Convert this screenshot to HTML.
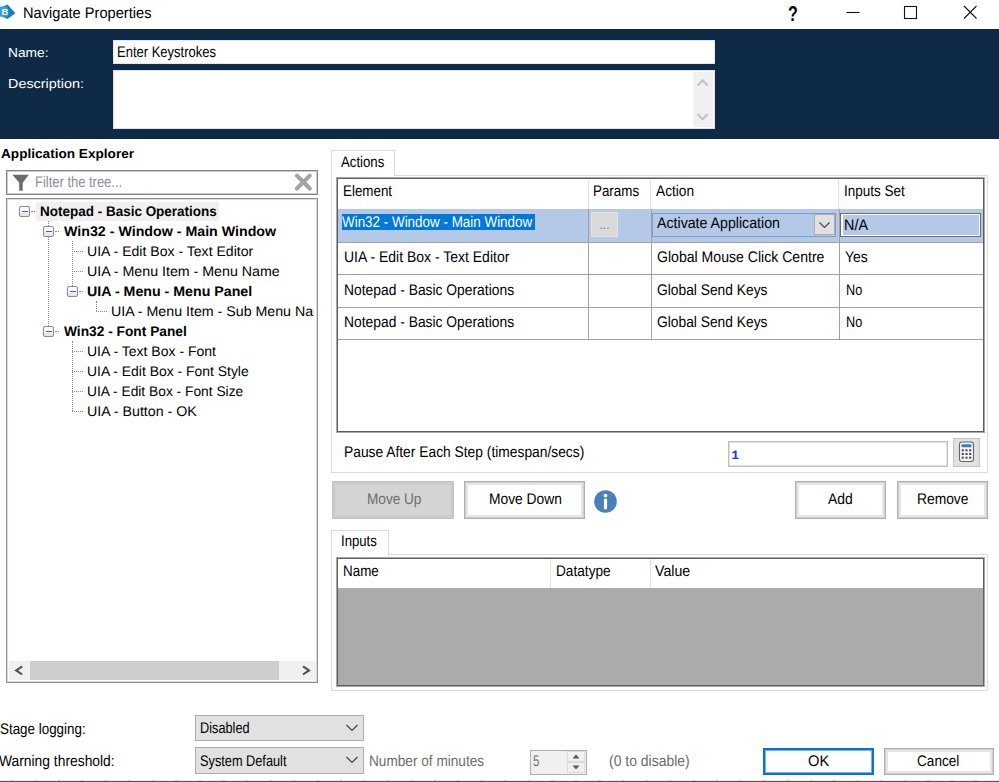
<!DOCTYPE html>
<html>
<head>
<meta charset="utf-8">
<title>Navigate Properties</title>
<style>
html,body{margin:0;padding:0;}
body{width:999px;height:782px;position:relative;overflow:hidden;background:#fff;font-family:"Liberation Sans",sans-serif;font-size:13px;color:#000;}
.a{position:absolute;white-space:nowrap;box-sizing:border-box;}
.t{position:absolute;white-space:pre;line-height:20px;height:20px;transform-origin:0 0;text-rendering:geometricPrecision;}
.hdr{left:0;top:29px;width:999px;height:110px;background:#0e2a47;}
.exp{position:absolute;width:11px;height:11px;box-sizing:border-box;border:1px solid #8a8a8a;border-radius:2px;background:linear-gradient(#fff,#e2e2e2);}
.exp:after{content:"";position:absolute;left:1.5px;top:4px;width:6px;height:1px;background:#4a60c0;}
.vd{position:absolute;width:0;border-left:1px dotted #8c8c8c;}
.hd{position:absolute;height:0;border-top:1px dotted #8c8c8c;}
.btn{position:absolute;box-sizing:border-box;border:1px solid #b0b0b0;background:#fff;box-shadow:inset 0 0 0 1px #cfcfcf,inset 0 0 0 3px #e6e6e6;}
.combo{position:absolute;box-sizing:border-box;border:1px solid #adadad;background:#e1e1e1;}
</style>
</head>
<body>
<!-- title bar -->
<svg class="a" style="left:0;top:0" width="17" height="24" viewBox="0 0 17 24"><path d="M7.6 4.6 L15.4 13.2 L7.6 19 L3 17 L3 6.4 Z" fill="#1b7fc6"/><rect x="-3" y="6.6" width="10.6" height="10.2" rx="1.6" fill="#3a9de0"/><text x="1.4" y="15" font-family="Liberation Sans, sans-serif" font-size="9.6" font-weight="bold" fill="#f2f9ff">B</text></svg>
<svg class="a" style="left:840px;top:0" width="159" height="29" viewBox="0 0 159 29" fill="none" stroke="#111" stroke-width="1.1">
<line x1="6.5" y1="12.5" x2="19.5" y2="12.5"/>
<rect x="64.5" y="6.5" width="12" height="12"/>
<line x1="124" y1="6" x2="136.5" y2="18.5"/><line x1="136.5" y1="6" x2="124" y2="18.5"/>
</svg>
<!-- header -->
<div class="a hdr"></div>
<div class="a" style="left:113px;top:40px;width:602px;height:24px;background:#fff;border:1px solid #e8e8e8;"></div>
<div class="a" style="left:113px;top:70px;width:602px;height:59px;background:#fff;border:1px solid #e0e0e0;"></div>
<div class="a" style="left:693px;top:72px;width:20px;height:55px;background:#f0f0f0;"></div>
<svg class="a" style="left:693px;top:72px" width="20" height="55" viewBox="0 0 20 55" fill="none" stroke="#c2c2c2" stroke-width="2.1"><polyline points="4.6,13.4 9.6,8.2 14.6,13.4"/><polyline points="4.6,42 9.6,47.2 14.6,42"/></svg>
<!-- left panel -->
<div class="a" style="left:6px;top:170px;width:312px;height:25px;border:1px solid #858585;box-shadow:inset 0 0 0 1px rgba(125,125,125,.4);background:#fff;"></div>
<svg class="a" style="left:0;top:170px" width="40" height="25" viewBox="0 170 40 25"><path d="M12.4 174.8 H28.9 L22.7 182.8 V190.7 H19.2 V182.8 Z" fill="#6b6b6b"/></svg>
<svg class="a" style="left:290px;top:170px" width="26" height="25" viewBox="290 170 26 25" stroke="#a3a3a3" stroke-width="4.1" stroke-linecap="round"><line x1="296.9" y1="175.6" x2="309.8" y2="188.5"/><line x1="309.8" y1="175.6" x2="296.9" y2="188.5"/></svg>
<div class="a" style="left:6px;top:198px;width:312px;height:485px;border:1px solid #8a8f9c;box-shadow:inset 0 0 0 1px rgba(130,135,150,.3);background:#fff;overflow:hidden;">
<div class="a" style="left:0;top:0;width:306.5px;height:462px;overflow:hidden;"><div class="a" style="left:-7px;top:-199px;width:999px;height:782px;">
<div class="a" style="left:36.3px;top:201.5px;width:182.4px;height:19.5px;background:#f0f0f0;"></div>
<div class="exp" style="left:19px;top:206.0px;"></div>
<div class="hd" style="left:31px;top:211.0px;width:4px;"></div>
<div class="exp" style="left:43px;top:226.0px;"></div>
<div class="hd" style="left:55px;top:231.0px;width:4px;"></div>
<div class="hd" style="left:72px;top:251.0px;width:11px;"></div>
<div class="hd" style="left:72px;top:271.0px;width:11px;"></div>
<div class="exp" style="left:67px;top:286.0px;"></div>
<div class="hd" style="left:79px;top:291.0px;width:4px;"></div>
<div class="hd" style="left:96px;top:311.0px;width:11px;"></div>
<div class="exp" style="left:43px;top:326.0px;"></div>
<div class="hd" style="left:55px;top:331.0px;width:4px;"></div>
<div class="hd" style="left:72px;top:351.0px;width:11px;"></div>
<div class="hd" style="left:72px;top:371.0px;width:11px;"></div>
<div class="hd" style="left:72px;top:391.0px;width:11px;"></div>
<div class="hd" style="left:72px;top:411.0px;width:11px;"></div>
<div class="vd" style="left:48px;top:221px;height:5px;"></div>
<div class="vd" style="left:48px;top:237px;height:89px;"></div>
<div class="vd" style="left:72px;top:241px;height:45px;"></div>
<div class="vd" style="left:96px;top:301px;height:10px;"></div>
<div class="vd" style="left:72px;top:341px;height:70px;"></div>
<div class="t" style="left:39.80px;top:201px;font-size:14px;font-weight:bold;transform:scaleX(0.9630);">Notepad - Basic Operations</div>
<div class="t" style="left:63.90px;top:221px;font-size:14px;font-weight:bold;transform:scaleX(1.0158);">Win32 - Window - Main Window</div>
<div class="t" style="left:87.30px;top:241px;font-size:14px;transform:scaleX(1.0042);">UIA - Edit Box - Text Editor</div>
<div class="t" style="left:87.30px;top:261px;font-size:14px;transform:scaleX(1.0147);">UIA - Menu Item - Menu Name</div>
<div class="t" style="left:87.30px;top:281px;font-size:14px;font-weight:bold;transform:scaleX(1.0147);">UIA - Menu - Menu Panel</div>
<div class="t" style="left:111.30px;top:301px;font-size:14px;transform:scaleX(1.0147);">UIA - Menu Item - Sub Menu Name</div>
<div class="t" style="left:63.90px;top:321px;font-size:14px;font-weight:bold;transform:scaleX(0.9816);">Win32 - Font Panel</div>
<div class="t" style="left:87.30px;top:341px;font-size:14px;transform:scaleX(1.0008);">UIA - Text Box - Font</div>
<div class="t" style="left:87.30px;top:361px;font-size:14px;transform:scaleX(0.9944);">UIA - Edit Box - Font Style</div>
<div class="t" style="left:87.30px;top:381px;font-size:14px;transform:scaleX(0.9843);">UIA - Edit Box - Font Size</div>
<div class="t" style="left:87.30px;top:401px;font-size:14px;transform:scaleX(1.0148);">UIA - Button - OK</div>
</div></div>
<div class="a" style="left:2px;top:462px;width:306.5px;height:19px;background:#f0f0f0;"></div>
<div class="a" style="left:23px;top:462px;width:248.5px;height:19px;background:#cdcdcd;"></div>
<svg class="a" style="left:2px;top:462px" width="307" height="19" viewBox="9 661 307 19" fill="none" stroke="#505050" stroke-width="2.1"><polyline points="22.2,666.3 16.2,670.4 22.2,674.5"/><polyline points="303,666.3 309,670.4 303,674.5"/></svg>
</div>
<!-- actions tab -->
<div class="a" style="left:331px;top:175px;width:657px;height:298px;border:1px solid #dcdcdc;background:#fff;"></div>
<div class="a" style="left:331px;top:150px;width:64px;height:26px;border:1px solid #dcdcdc;border-bottom:none;background:#fff;"></div>
<div class="a" style="left:336px;top:177px;width:649px;height:256px;border:1px solid #a8a8a8;background:#fff;"></div>
<div class="a" style="left:337px;top:178px;width:647px;height:254px;border:1px solid #5f5f5f;background:#fff;"></div>
<div class="a" style="left:587.5px;top:180px;width:1px;height:29px;background:#e2e2e2;"></div>
<div class="a" style="left:650px;top:180px;width:1px;height:29px;background:#e2e2e2;"></div>
<div class="a" style="left:838px;top:180px;width:1px;height:29px;background:#e2e2e2;"></div>
<div class="a" style="left:338px;top:209px;width:645px;height:32.5px;background:#b4c8e8;"></div>
<div class="a" style="left:338px;top:241.5px;width:645px;height:1px;background:#a0a0a0;"></div>
<div class="a" style="left:338px;top:274px;width:645px;height:1px;background:#a0a0a0;"></div>
<div class="a" style="left:338px;top:306.5px;width:645px;height:1px;background:#a0a0a0;"></div>
<div class="a" style="left:338px;top:339px;width:645px;height:1px;background:#a0a0a0;"></div>
<div class="a" style="left:588px;top:209px;width:1px;height:131px;background:#a0a0a0;"></div>
<div class="a" style="left:651px;top:209px;width:1px;height:131px;background:#a0a0a0;"></div>
<div class="a" style="left:838.5px;top:209px;width:1px;height:131px;background:#a0a0a0;"></div>
<div class="a" style="left:342px;top:214px;width:192.5px;height:16px;background:#0078d7;"></div>
<div class="a" style="left:591px;top:212px;width:27px;height:25px;background:#d9d9d9;border:1px solid #e3e3e3;"></div>
<div class="t" style="left:599.5px;top:215px;font-size:12px;color:#777;">...</div>
<div class="a" style="left:652px;top:212.5px;width:184px;height:24.5px;border:1px solid #7f9bc8;background:#b4c8e8;"></div>
<div class="a" style="left:814px;top:214px;width:21px;height:21px;border:1px solid #adadad;background:#e1e1e1;"></div>
<svg class="a" style="left:814px;top:214px" width="21" height="21" viewBox="0 0 21 21" fill="none" stroke="#444" stroke-width="1.2"><polyline points="5.5,8.5 10.5,13.5 15.5,8.5"/></svg>
<div class="a" style="left:840px;top:212.5px;width:141px;height:24px;border:1px solid #6e6e6e;background:#fff;"></div>
<div class="a" style="left:842.5px;top:215px;width:136.5px;height:19.5px;background:#b4c8e8;"></div>
<div class="a" style="left:728px;top:441px;width:220px;height:26px;border:1px solid #bcbec6;box-shadow:inset 0 0 0 1px rgba(190,192,200,.45);background:#fff;"></div>
<div class="t" style="left:731.2px;top:446px;font-family:'Liberation Mono',monospace;font-size:13px;color:#2a2aff;font-weight:bold;">1</div>
<div class="a" style="left:953px;top:438px;width:27px;height:29px;border:1px solid #c4c4c4;background:#e1e1e1;"></div>
<svg class="a" style="left:953px;top:438px" width="27" height="29" viewBox="0 0 27 29"><rect x="6.5" y="4" width="14" height="19.5" rx="2.5" fill="#f4f4f4" stroke="#666" stroke-width="1.1"/><rect x="8.5" y="6.3" width="10" height="3" rx="1" fill="#3d7cc4"/><g fill="#444"><rect x="8.8" y="11.3" width="2" height="2"/><rect x="12.5" y="11.3" width="2" height="2"/><rect x="16.2" y="11.3" width="2" height="2"/><rect x="8.8" y="15" width="2" height="2"/><rect x="12.5" y="15" width="2" height="2"/><rect x="16.2" y="15" width="2" height="2"/><rect x="8.8" y="18.7" width="2" height="2"/><rect x="12.5" y="18.7" width="2" height="2"/><rect x="16.2" y="18.7" width="2" height="2"/></g></svg>
<div class="a" style="left:332px;top:481px;width:122px;height:38px;border:1px solid #c2c2c2;background:#d4d4d4;box-shadow:inset 0 0 0 1px #c8c8c8,inset 0 0 0 3px #cecece;"></div>
<div class="btn" style="left:464px;top:481px;width:121px;height:38px;"></div>
<svg class="a" style="left:593px;top:489px" width="25" height="25" viewBox="0 0 25 25"><circle cx="12.5" cy="12.5" r="11.3" fill="#4a7fb8"/><circle cx="12.5" cy="6.6" r="1.9" fill="#fff"/><rect x="10.9" y="9.8" width="3.2" height="10.4" rx="0.6" fill="#fff"/></svg>
<div class="btn" style="left:795px;top:481px;width:91px;height:38px;"></div>
<div class="btn" style="left:896.5px;top:481px;width:91px;height:38px;"></div>
<!-- inputs tab -->
<div class="a" style="left:331px;top:554px;width:657px;height:137px;border:1px solid #dcdcdc;background:#fff;"></div>
<div class="a" style="left:331px;top:529.5px;width:57.5px;height:26px;border:1px solid #dcdcdc;border-bottom:none;background:#fff;"></div>
<div class="a" style="left:336px;top:556.5px;width:649px;height:130.5px;border:1px solid #a8a8a8;background:#fff;"></div>
<div class="a" style="left:337px;top:557.5px;width:647px;height:128.5px;border:1px solid #5f5f5f;background:#ababab;"></div>
<div class="a" style="left:338px;top:558.5px;width:645px;height:29.5px;background:#fff;"></div>
<div class="a" style="left:549.5px;top:559px;width:1px;height:29px;background:#e2e2e2;"></div>
<div class="a" style="left:650px;top:559px;width:1px;height:29px;background:#e2e2e2;"></div>
<!-- bottom -->
<div class="combo" style="left:194.5px;top:714.5px;width:169px;height:26.5px;"></div>
<svg class="a" style="left:345px;top:722.5px" width="14" height="10" viewBox="0 0 14 10" fill="none" stroke="#444" stroke-width="1.2"><polyline points="1.5,2 7,7.5 12.5,2"/></svg>
<div class="combo" style="left:194.5px;top:747px;width:169px;height:26.5px;"></div>
<svg class="a" style="left:345px;top:755px" width="14" height="10" viewBox="0 0 14 10" fill="none" stroke="#444" stroke-width="1.2"><polyline points="1.5,2 7,7.5 12.5,2"/></svg>
<div class="a" style="left:530px;top:750px;width:57px;height:24.5px;border:1px solid #adadad;background:#f0f0f0;"></div>
<svg class="a" style="left:567px;top:751px" width="18" height="22" viewBox="0 0 18 22"><rect x="0.5" y="0.5" width="17" height="10" fill="#f0f0f0" stroke="#dadada"/><rect x="0.5" y="11.5" width="17" height="10" fill="#f0f0f0" stroke="#dadada"/><polygon points="5.5,7.5 9,3.5 12.5,7.5" fill="#555"/><polygon points="5.5,14.5 9,18.5 12.5,14.5" fill="#555"/></svg>
<div class="a" style="left:763px;top:748px;width:110.5px;height:27px;border:2px solid #0b72d2;box-shadow:inset 0 0 0 1px rgba(11,114,210,.55);background:#fff;"></div>
<div class="btn" style="left:884px;top:748px;width:110px;height:27px;"></div>
<div class="a" style="left:0;top:780px;width:999px;height:1px;background:repeating-linear-gradient(90deg,rgba(80,80,80,.12) 0,rgba(80,80,80,.12) 10.5px,rgba(80,80,80,.3) 10.5px,rgba(80,80,80,.3) 13px,rgba(80,80,80,.12) 13px,rgba(80,80,80,.12) 23.5px);"></div>
<div class="a" style="left:0;top:781px;width:999px;height:1px;background:#555;"></div>
<!-- text -->
<div class="t" style="left:22.60px;top:4px;font-size:15.4px;transform:scaleX(0.9504);">Navigate Properties</div>
<div class="t" style="left:788.45px;top:4px;font-size:21.5px;font-weight:bold;transform:scaleX(0.7455);">?</div>
<div class="t" style="left:8.00px;top:43px;font-size:13px;color:#fff;transform:scaleX(1.0579);">Name:</div>
<div class="t" style="left:8.00px;top:74px;font-size:13px;color:#fff;transform:scaleX(1.1074);">Description:</div>
<div class="t" style="left:117.40px;top:43px;font-size:15.4px;transform:scaleX(0.8444);">Enter Keystrokes</div>
<div class="t" style="left:1.30px;top:144px;font-size:13px;font-weight:bold;transform:scaleX(1.0465);">Application Explorer</div>
<div class="t" style="left:35.20px;top:173px;font-size:15.4px;color:#8c8c9c;transform:scaleX(0.8417);">Filter the tree...</div>
<div class="t" style="left:341.20px;top:153px;font-size:15.4px;transform:scaleX(0.8580);">Actions</div>
<div class="t" style="left:342.80px;top:182px;font-size:15.4px;transform:scaleX(0.8684);">Element</div>
<div class="t" style="left:593.20px;top:182px;font-size:15.4px;transform:scaleX(0.8698);">Params</div>
<div class="t" style="left:655.80px;top:182px;font-size:15.4px;transform:scaleX(0.8907);">Action</div>
<div class="t" style="left:843.52px;top:182px;font-size:15.4px;transform:scaleX(0.8783);">Inputs Set</div>
<div class="t" style="left:342.00px;top:213px;font-size:15.4px;color:#fff;transform:scaleX(0.8721);">Win32 - Window - Main Window</div>
<div class="t" style="left:656.80px;top:214px;font-size:15.4px;transform:scaleX(0.9211);">Activate Application</div>
<div class="t" style="left:844.10px;top:216px;font-size:15.4px;transform:scaleX(0.9346);">N/A</div>
<div class="t" style="left:343.80px;top:248px;font-size:15.4px;transform:scaleX(0.9088);">UIA - Edit Box - Text Editor</div>
<div class="t" style="left:657.10px;top:248px;font-size:15.4px;transform:scaleX(0.9148);">Global Mouse Click Centre</div>
<div class="t" style="left:845.30px;top:248px;font-size:15.4px;transform:scaleX(0.9000);">Yes</div>
<div class="t" style="left:343.80px;top:281px;font-size:15.4px;transform:scaleX(0.8995);">Notepad - Basic Operations</div>
<div class="t" style="left:657.10px;top:281px;font-size:15.4px;transform:scaleX(0.8967);">Global Send Keys</div>
<div class="t" style="left:845.60px;top:281px;font-size:15.4px;transform:scaleX(0.8250);">No</div>
<div class="t" style="left:343.80px;top:313px;font-size:15.4px;transform:scaleX(0.8995);">Notepad - Basic Operations</div>
<div class="t" style="left:657.10px;top:313px;font-size:15.4px;transform:scaleX(0.8967);">Global Send Keys</div>
<div class="t" style="left:845.60px;top:313px;font-size:15.4px;transform:scaleX(0.8250);">No</div>
<div class="t" style="left:344.40px;top:443px;font-size:15.4px;transform:scaleX(0.8974);">Pause After Each Step (timespan/secs)</div>
<div class="t" style="left:366.50px;top:490px;font-size:15.4px;color:#6d6d6d;transform:scaleX(0.8839);">Move Up</div>
<div class="t" style="left:488.90px;top:490px;font-size:15.4px;transform:scaleX(0.8975);">Move Down</div>
<div class="t" style="left:828.20px;top:490px;font-size:15.4px;transform:scaleX(0.9037);">Add</div>
<div class="t" style="left:916.60px;top:490px;font-size:15.4px;transform:scaleX(0.8982);">Remove</div>
<div class="t" style="left:340.65px;top:532px;font-size:15.4px;transform:scaleX(0.8537);">Inputs</div>
<div class="t" style="left:342.60px;top:562px;font-size:15.4px;transform:scaleX(0.8707);">Name</div>
<div class="t" style="left:555.80px;top:562px;font-size:15.4px;transform:scaleX(0.8869);">Datatype</div>
<div class="t" style="left:655.40px;top:562px;font-size:15.4px;transform:scaleX(0.9211);">Value</div>
<div class="t" style="left:0.30px;top:720px;font-size:15.4px;transform:scaleX(0.8704);">Stage logging:</div>
<div class="t" style="left:-0.80px;top:752px;font-size:15.4px;transform:scaleX(0.8992);">Warning threshold:</div>
<div class="t" style="left:199.90px;top:719px;font-size:15.4px;transform:scaleX(0.8283);">Disabled</div>
<div class="t" style="left:199.90px;top:752px;font-size:15.4px;transform:scaleX(0.8286);">System Default</div>
<div class="t" style="left:369.40px;top:752px;font-size:15.4px;color:#6d6d6d;transform:scaleX(0.8854);">Number of minutes</div>
<div class="t" style="left:533.30px;top:752px;font-size:15.4px;color:#6d6d6d;transform:scaleX(0.7444);">5</div>
<div class="t" style="left:609.40px;top:752px;font-size:15.4px;color:#6d6d6d;transform:scaleX(0.9079);">(0 to disable)</div>
<div class="t" style="left:808.20px;top:752px;font-size:15.4px;transform:scaleX(0.9545);">OK</div>
<div class="t" style="left:916.50px;top:752px;font-size:15.4px;transform:scaleX(0.8833);">Cancel</div>
</body>
</html>
